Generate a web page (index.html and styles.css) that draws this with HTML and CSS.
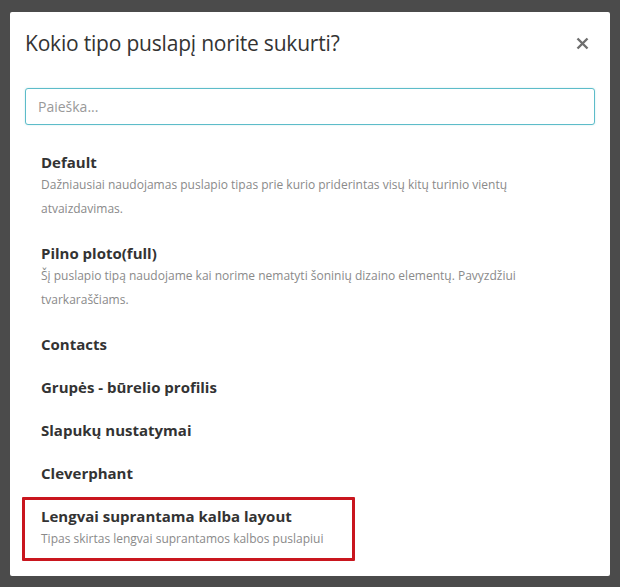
FILE: index.html
```html
<!DOCTYPE html>
<html lang="lt">
<head>
<meta charset="utf-8">
<title>Kokio tipo puslapį norite sukurti?</title>
<link rel="stylesheet" href="styles.css">
</head>
<body>
<div class="modal">
  <div class="modal-header">
    <h2 class="modal-title">Kokio tipo puslapį norite sukurti?</h2>
    <button class="close" type="button" aria-label="Uždaryti">
      <svg width="13" height="13" viewBox="0 0 13 13"><path d="M1.5 1.5 L11.5 11.5 M11.5 1.5 L1.5 11.5" stroke="#6f6f6f" stroke-width="2.4" stroke-linecap="butt" fill="none"/></svg>
    </button>
  </div>
  <div class="modal-body">
    <input class="search" type="text" placeholder="Paieška...">
    <ul class="types">
      <li class="type">
        <div class="type-name">Default</div>
        <div class="type-desc">Dažniausiai naudojamas puslapio tipas prie kurio priderintas visų kitų turinio vientų atvaizdavimas.</div>
      </li>
      <li class="type">
        <div class="type-name">Pilno ploto(full)</div>
        <div class="type-desc">Šį puslapio tipą naudojame kai norime nematyti šoninių dizaino elementų. Pavyzdžiui tvarkaraščiams.</div>
      </li>
      <li class="type"><div class="type-name">Contacts</div></li>
      <li class="type"><div class="type-name">Grupės - būrelio profilis</div></li>
      <li class="type"><div class="type-name">Slapukų nustatymai</div></li>
      <li class="type"><div class="type-name">Cleverphant</div></li>
      <li class="type marked">
        <div class="type-name">Lengvai suprantama kalba layout</div>
        <div class="type-desc">Tipas skirtas lengvai suprantamos kalbos puslapiui</div>
        <span class="mark"></span>
      </li>
    </ul>
  </div>
</div>
</body>
</html>
```

FILE: styles.css
```css
html, body {
  margin: 0;
  padding: 0;
  height: 100%;
}
body {
  background: #4b4b4b;
  font-family: "Open Sans", "Noto Sans", sans-serif;
  color: #333;
  overflow: hidden;
}
.modal {
  box-sizing: border-box;
  margin: 12px 10px 0;
  width: 600px;
  height: 564px;
  background: #fff;
  border-radius: 2px;
  overflow: hidden;
}
.modal-header {
  display: flex;
  align-items: center;
  justify-content: space-between;
  padding: 17px 21px 0 15px;
  height: 28px;
}
.modal-title {
  margin: 0;
  font-size: 21px;
  font-weight: 400;
  line-height: 28px;
  color: #333;
  letter-spacing: -0.2px;
}
.close {
  border: 0;
  background: none;
  padding: 0;
  margin: 0;
  width: 13px;
  height: 13px;
  display: flex;
  cursor: pointer;
}
.modal-body {
  padding: 31px 15px 0;
}
.search {
  display: block;
  box-sizing: border-box;
  width: 570px;
  height: 37px;
  margin: 0;
  padding: 0 12px;
  border: 1px solid #5dbcc9;
  border-radius: 3px;
  font-family: inherit;
  font-size: 14px;
  color: #555;
  outline: none;
  box-shadow: 0 0 2px rgba(93, 188, 201, 0.35);
}
.search::placeholder {
  color: #999;
}
.types {
  list-style: none;
  margin: 16px 0 0;
  padding: 0;
}
.type {
  position: relative;
  padding: 10px 16px 11px;
}
.type-name {
  font-size: 15px;
  font-weight: 700;
  line-height: 22px;
  color: #333;
}
.type-desc {
  font-size: 12px;
  line-height: 24px;
  color: #8a8a8a;
}
.mark {
  position: absolute;
  left: -3px;
  top: 2px;
  width: 333px;
  height: 64px;
  box-sizing: border-box;
  border: 3px solid #c9161e;
  border-radius: 1px;
  pointer-events: none;
}
```
